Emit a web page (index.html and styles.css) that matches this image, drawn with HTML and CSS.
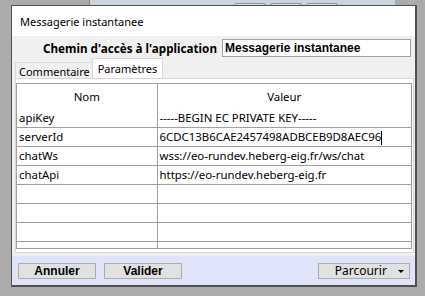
FILE: index.html
```html
<!DOCTYPE html>
<html lang="fr">
<head>
    <meta charset="UTF-8">
    <title>Messagerie instantanee</title>
    <link rel="stylesheet" href="styles.css">
</head>
<body>
    <!-- Application behind the dialog -->
    <div class="desktop">
        <div class="app-strip">
            <span class="strip-tab"></span>
            <span class="strip-tab"></span>
            <span class="strip-tab"></span>
        </div>
    </div>

    <div class="dialog">
        <div class="dialog-title">Messagerie instantanee</div>

        <div class="dialog-body">
            <div class="path-row">
                <label class="path-label" for="path">Chemin d'accès à l'application</label>
                <input id="path" class="path-input" type="text" value="Messagerie instantanee">
            </div>

            <div class="tabs">
                <span class="tab">Commentaire</span>
                <span class="tab tab-active">Paramètres</span>
            </div>

            <div class="tab-panel">
                <div class="grid-wrap">
                    <table class="grid">
                        <colgroup>
                            <col class="col-name">
                            <col>
                        </colgroup>
                        <thead>
                            <tr><th>Nom</th><th>Valeur</th></tr>
                        </thead>
                        <tbody>
                            <tr><td>apiKey</td><td>-----BEGIN EC PRIVATE KEY-----</td></tr>
                            <tr><td>serverId</td><td>6CDC13B6CAE2457498ADBCEB9D8AEC96<span class="caret"></span></td></tr>
                            <tr><td>chatWs</td><td>wss://eo-rundev.heberg-eig.fr/ws/chat</td></tr>
                            <tr><td>chatApi</td><td>https://eo-rundev.heberg-eig.fr</td></tr>
                            <tr><td></td><td></td></tr>
                            <tr><td></td><td></td></tr>
                            <tr><td></td><td></td></tr>
                            <tr><td></td><td></td></tr>
                        </tbody>
                    </table>
                </div>
            </div>

            <div class="footer">
                <button class="btn btn-bold">Annuler</button>
                <button class="btn btn-bold">Valider</button>
                <button class="btn btn-menu">Parcourir <span class="arrow"></span></button>
            </div>
        </div>
    </div>
</body>
</html>
```

FILE: styles.css
```css
body {
    margin: 0;
    width: 425px;
    height: 296px;
    overflow: hidden;
    background: #ababab;
    font-family: "Noto Sans", "DejaVu Sans", sans-serif;
    position: relative;
}

.desktop {
    height: 296px;
}

.app-strip {
    margin-left: 89px;
    width: 306px;
    height: 6px;
    background: #c9d4e0;
    border-left: 1px solid #8a8a8a;
    display: flex;
    gap: 4px;
    padding-left: 144px;
    box-sizing: border-box;
}

.strip-tab {
    width: 30px;
    height: 3px;
    margin-top: 3px;
    border: 1px solid #8c99a8;
    border-bottom: none;
    border-radius: 3px 3px 0 0;
    background: #d5dde6;
}

/* Dialog window */
.dialog {
    position: absolute;
    left: 11px;
    top: 5px;
    width: 406px;
    height: 282px;
    box-sizing: border-box;
    border: 1px solid #505050;
    border-right-width: 2px;
    border-bottom-width: 2px;
    background: #f0f0f0;
    display: flex;
    flex-direction: column;
}

.dialog-title {
    height: 30px;
    background: #fff;
    padding-left: 8px;
    font-size: 11px;
    line-height: 31px;
    color: #000;
}

.dialog-body {
    flex: 1;
    display: flex;
    flex-direction: column;
}

.path-row {
    display: flex;
    justify-content: flex-end;
    align-items: center;
    gap: 5px;
    height: 18px;
    margin-top: 3px;
    padding-right: 4px;
}

.path-label {
    font-size: 11.7px;
    font-weight: bold;
    color: #000;
}

.path-input {
    width: 189px;
    height: 18px;
    box-sizing: border-box;
    border: 1px solid #a0a0a0;
    padding: 0 2px;
    font-family: "Liberation Sans", Arial, sans-serif;
    font-size: 12px;
    font-weight: bold;
    color: #000;
    background: #fff;
}

.tabs {
    display: flex;
    align-items: flex-end;
    height: 20px;
    margin-top: 1px;
    padding-left: 3px;
}

.tab {
    height: 16px;
    padding: 0 2px 0 3px;
    font-size: 11px;
    line-height: 17px;
    color: #000;
    border: 1px solid #d9d9d9;
    border-bottom: none;
    border-right: none;
    box-sizing: border-box;
}

.tab-active {
    height: 20px;
    background: #fff;
    border-right: 1px solid #d9d9d9;
    line-height: 19px;
    padding: 0 5px;
}

.tab-panel {
    margin: 0 1px 0 3px;
    height: 175px;
    box-sizing: border-box;
    border: 1px solid #d9d9d9;
    background: #fff;
    padding: 4px 0 0 0;
}

.grid-wrap {
    width: 396px;
    height: 166px;
    box-sizing: border-box;
    border: 1px solid #a0a0a0;
    overflow: hidden;
}

.grid {
    width: 100%;
    table-layout: fixed;
    border-collapse: collapse;
    font-size: 11.4px;
    color: #000;
}

.col-name {
    width: 140px;
}

.grid th {
    height: 25px;
    font-weight: normal;
    text-align: center;
    padding: 0;
    border-right: 1px solid #a0a0a0;
    vertical-align: middle;
}

.grid td {
    height: 18px;
    padding: 0 0 0 2px;
    border-bottom: 1px solid #a0a0a0;
    border-right: 1px solid #a0a0a0;
    white-space: nowrap;
    overflow: hidden;
    line-height: 18px;
}

.grid td:last-child,
.grid th:last-child {
    border-right: none;
}

.caret {
    display: inline-block;
    width: 1px;
    height: 14px;
    background: #000;
    vertical-align: middle;
}

.footer {
    margin-top: 3px;
    flex: 1;
    background: #dfe4fb;
    display: flex;
    align-items: center;
    padding: 0 5px 0 6px;
    gap: 8px;
}

.btn {
    height: 16px;
    width: 78px;
    box-sizing: border-box;
    border: 1px solid #adadad;
    background: #e1e1e1;
    font-family: "Liberation Sans", Arial, sans-serif;
    font-size: 12px;
    color: #000;
    padding: 0;
    line-height: 14px;
}

.btn-bold {
    font-weight: bold;
}

.btn-menu {
    margin-left: auto;
    width: 92px;
    font-family: "Noto Sans", sans-serif;
    text-align: right;
    padding-right: 5px;
}

.arrow {
    display: inline-block;
    width: 0;
    height: 0;
    margin-left: 8px;
    border-left: 3px solid transparent;
    border-right: 3px solid transparent;
    border-top: 3px solid #000;
    vertical-align: middle;
}
```
